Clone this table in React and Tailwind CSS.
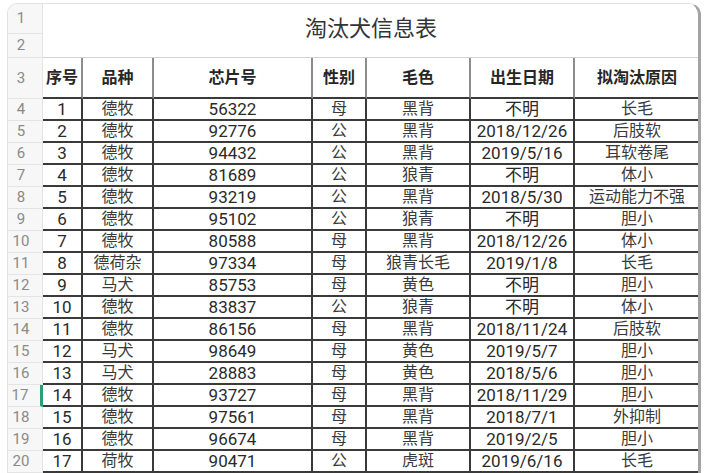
import React from 'react';

const rows = [
  ['1', '德牧', '56322', '母', '黑背', '不明', '长毛'],
  ['2', '德牧', '92776', '公', '黑背', '2018/12/26', '后肢软'],
  ['3', '德牧', '94432', '公', '黑背', '2019/5/16', '耳软卷尾'],
  ['4', '德牧', '81689', '公', '狼青', '不明', '体小'],
  ['5', '德牧', '93219', '公', '黑背', '2018/5/30', '运动能力不强'],
  ['6', '德牧', '95102', '公', '狼青', '不明', '胆小'],
  ['7', '德牧', '80588', '母', '黑背', '2018/12/26', '体小'],
  ['8', '德荷杂', '97334', '母', '狼青长毛', '2019/1/8', '长毛'],
  ['9', '马犬', '85753', '母', '黄色', '不明', '胆小'],
  ['10', '德牧', '83837', '公', '狼青', '不明', '体小'],
  ['11', '德牧', '86156', '母', '黑背', '2018/11/24', '后肢软'],
  ['12', '马犬', '98649', '母', '黄色', '2019/5/7', '胆小'],
  ['13', '马犬', '28883', '母', '黄色', '2018/5/6', '胆小'],
  ['14', '德牧', '93727', '母', '黑背', '2018/11/29', '胆小'],
  ['15', '德牧', '97561', '母', '黑背', '2018/7/1', '外抑制'],
  ['16', '德牧', '96674', '母', '黑背', '2019/2/5', '胆小'],
  ['17', '荷牧', '90471', '公', '虎斑', '2019/6/16', '长毛'],
];

const headers = ['序号', '品种', '芯片号', '性别', '毛色', '出生日期', '拟淘汰原因'];

const font = { fontFamily: "Roboto, 'Noto Sans CJK SC', sans-serif" };

function RowNum({ n, h, active }) {
  return (
    <div
      className={
        'flex items-center justify-center pr-[8px] bg-[#f7f7f7] border-b border-[#e4e4e4] text-[15px] text-[#8a8a8a] ' +
        h +
        (active ? ' border-r-[3px] border-r-[#2f9c78]' : ' border-r border-r-[#e4e4e4]')
      }
    >
      {n}
    </div>
  );
}

export default function App() {
  return (
    <div className="w-[706px] h-[473px] bg-white overflow-hidden pt-[3px] pl-[7px]" style={font}>
      <div className="w-[694px] h-[480px] border-t border-l border-r-[3px] border-[#e2e2e2] border-r-[#a3a3a3] rounded-tl-[10px] rounded-tr-[12px] overflow-hidden">
        <div className="grid grid-cols-[35px_40px_71px_159px_54px_104px_104px_124px] text-[#2e2e2e]">
          {/* title rows */}
          <RowNum n="1" h="h-[30px]" />
          <div className="col-span-7 row-span-2 flex items-center justify-center pb-[5px] border-b border-[#d2d2d2] text-[22px] text-[#333]">
            淘汰犬信息表
          </div>
          <RowNum n="2" h="h-[24px]" />

          {/* header row */}
          <RowNum n="3" h="h-[41px]" />
          {headers.map((t, i) => (
            <div
              key={t}
              className={
                'h-[41px] flex items-center justify-center font-bold text-[16px] text-[#262626] border-b-2 border-b-[#3a3a3a] ' +
                (i === 6 ? '' : 'border-r-2 border-r-[#8c8c8c]')
              }
            >
              {t}
            </div>
          ))}

          {/* data rows */}
          {rows.map((r, ri) => (
            <React.Fragment key={ri}>
              <RowNum n={ri + 4} h="h-[22px]" active={ri === 13} />
              {r.map((c, ci) => (
                <div
                  key={ci}
                  className={
                    'h-[22px] flex items-center justify-center border-b-2 border-b-[#3a3a3a] leading-none ' +
                    (ci === 6 ? '' : 'border-r-2 border-r-[#3a3a3a] ') +
                    (ci === 0 || ci === 2 || ci === 5 ? 'text-[17px] text-[#2a2a2a]' : 'text-[16px] text-[#3a3a3a]')
                  }
                >
                  {c}
                </div>
              ))}
            </React.Fragment>
          ))}
        </div>
      </div>
    </div>
  );
}
